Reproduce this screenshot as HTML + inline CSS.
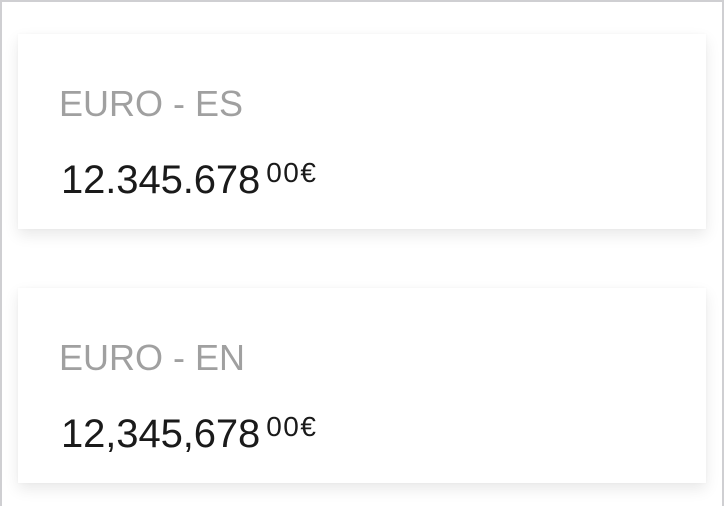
<!DOCTYPE html>
<html><head><meta charset="utf-8"><style>
html,body{margin:0;padding:0;}
body{width:724px;height:506px;overflow:hidden;background:#fff;font-family:"Liberation Sans",Arial,sans-serif;position:relative;}
.frame{position:absolute;left:0;top:0;width:720px;height:504px;border:2px solid #cfcfd2;border-bottom:none;}
.card{position:absolute;left:18px;width:688px;height:195px;background:#fff;box-shadow:0 6px 14px rgba(0,0,0,0.09),0 0 3px rgba(0,0,0,0.03);}
.t{position:absolute;left:41px;top:50px;font-size:36px;color:#a0a0a0;line-height:40px;}
.n{position:absolute;left:43px;top:124px;font-size:40px;color:#1a1a1a;line-height:44px;letter-spacing:-0.1px;}
.n sup{font-size:28px;vertical-align:0;position:relative;top:-11px;margin-left:6px;letter-spacing:1.5px;}
</style></head><body>
<div class="frame"></div>
<div class="card" style="top:34px"><div class="t">EURO - ES</div><div class="n">12.345.678<sup>00€</sup></div></div>
<div class="card" style="top:288px"><div class="t">EURO - EN</div><div class="n">12,345,678<sup>00€</sup></div></div>
</body></html>
